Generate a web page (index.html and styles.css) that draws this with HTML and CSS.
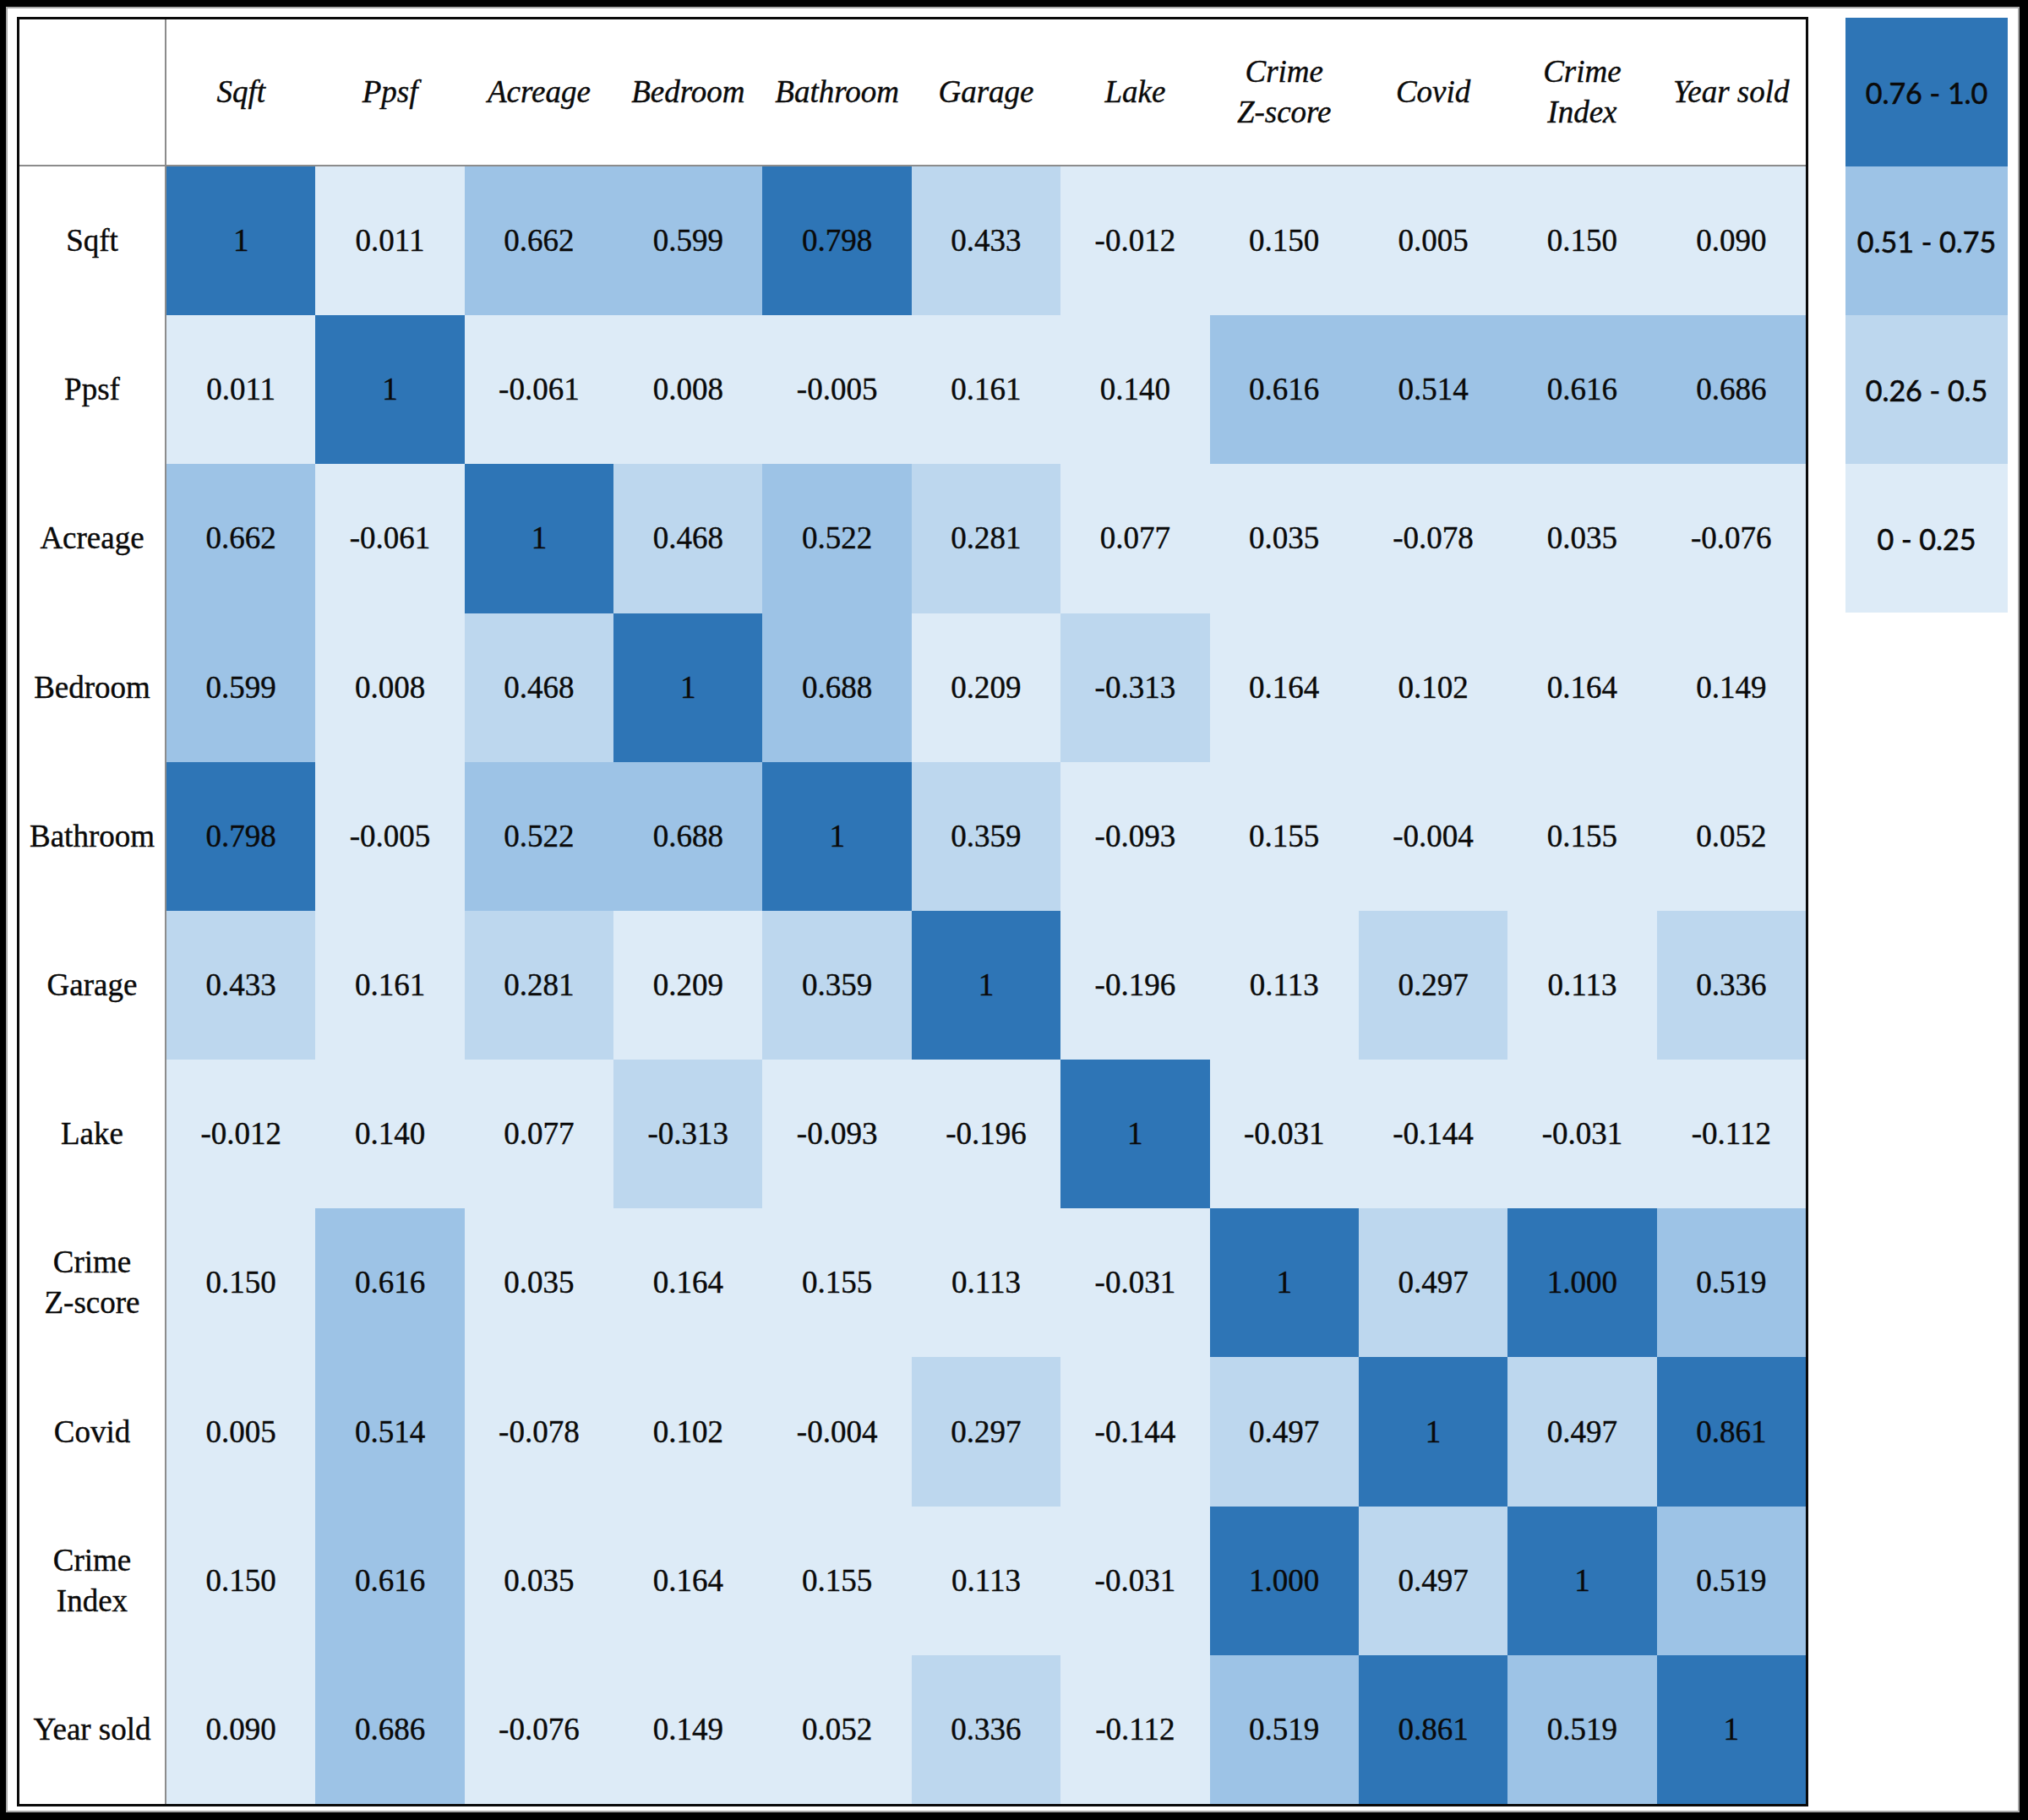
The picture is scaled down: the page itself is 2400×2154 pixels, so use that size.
FILE: index.html
```html
<!DOCTYPE html>
<html lang="en">
<head>
<meta charset="utf-8">
<title>Correlation matrix</title>
<link rel="stylesheet" href="styles.css">
</head>
<body>
<div class="frame">
  <div class="matrix">
    <div class="corner"></div>
    <div class="colhead">Sqft</div>
    <div class="colhead">Ppsf</div>
    <div class="colhead">Acreage</div>
    <div class="colhead">Bedroom</div>
    <div class="colhead">Bathroom</div>
    <div class="colhead">Garage</div>
    <div class="colhead">Lake</div>
    <div class="colhead">Crime<br>Z-score</div>
    <div class="colhead">Covid</div>
    <div class="colhead">Crime<br>Index</div>
    <div class="colhead">Year sold</div>

    <div class="rowhead">Sqft</div>
    <div class="cell c4">1</div><div class="cell c1">0.011</div><div class="cell c3">0.662</div><div class="cell c3">0.599</div><div class="cell c4">0.798</div><div class="cell c2">0.433</div><div class="cell c1">-0.012</div><div class="cell c1">0.150</div><div class="cell c1">0.005</div><div class="cell c1">0.150</div><div class="cell c1">0.090</div>

    <div class="rowhead">Ppsf</div>
    <div class="cell c1">0.011</div><div class="cell c4">1</div><div class="cell c1">-0.061</div><div class="cell c1">0.008</div><div class="cell c1">-0.005</div><div class="cell c1">0.161</div><div class="cell c1">0.140</div><div class="cell c3">0.616</div><div class="cell c3">0.514</div><div class="cell c3">0.616</div><div class="cell c3">0.686</div>

    <div class="rowhead">Acreage</div>
    <div class="cell c3">0.662</div><div class="cell c1">-0.061</div><div class="cell c4">1</div><div class="cell c2">0.468</div><div class="cell c3">0.522</div><div class="cell c2">0.281</div><div class="cell c1">0.077</div><div class="cell c1">0.035</div><div class="cell c1">-0.078</div><div class="cell c1">0.035</div><div class="cell c1">-0.076</div>

    <div class="rowhead">Bedroom</div>
    <div class="cell c3">0.599</div><div class="cell c1">0.008</div><div class="cell c2">0.468</div><div class="cell c4">1</div><div class="cell c3">0.688</div><div class="cell c1">0.209</div><div class="cell c2">-0.313</div><div class="cell c1">0.164</div><div class="cell c1">0.102</div><div class="cell c1">0.164</div><div class="cell c1">0.149</div>

    <div class="rowhead">Bathroom</div>
    <div class="cell c4">0.798</div><div class="cell c1">-0.005</div><div class="cell c3">0.522</div><div class="cell c3">0.688</div><div class="cell c4">1</div><div class="cell c2">0.359</div><div class="cell c1">-0.093</div><div class="cell c1">0.155</div><div class="cell c1">-0.004</div><div class="cell c1">0.155</div><div class="cell c1">0.052</div>

    <div class="rowhead">Garage</div>
    <div class="cell c2">0.433</div><div class="cell c1">0.161</div><div class="cell c2">0.281</div><div class="cell c1">0.209</div><div class="cell c2">0.359</div><div class="cell c4">1</div><div class="cell c1">-0.196</div><div class="cell c1">0.113</div><div class="cell c2">0.297</div><div class="cell c1">0.113</div><div class="cell c2">0.336</div>

    <div class="rowhead">Lake</div>
    <div class="cell c1">-0.012</div><div class="cell c1">0.140</div><div class="cell c1">0.077</div><div class="cell c2">-0.313</div><div class="cell c1">-0.093</div><div class="cell c1">-0.196</div><div class="cell c4">1</div><div class="cell c1">-0.031</div><div class="cell c1">-0.144</div><div class="cell c1">-0.031</div><div class="cell c1">-0.112</div>

    <div class="rowhead">Crime<br>Z-score</div>
    <div class="cell c1">0.150</div><div class="cell c3">0.616</div><div class="cell c1">0.035</div><div class="cell c1">0.164</div><div class="cell c1">0.155</div><div class="cell c1">0.113</div><div class="cell c1">-0.031</div><div class="cell c4">1</div><div class="cell c2">0.497</div><div class="cell c4">1.000</div><div class="cell c3">0.519</div>

    <div class="rowhead">Covid</div>
    <div class="cell c1">0.005</div><div class="cell c3">0.514</div><div class="cell c1">-0.078</div><div class="cell c1">0.102</div><div class="cell c1">-0.004</div><div class="cell c2">0.297</div><div class="cell c1">-0.144</div><div class="cell c2">0.497</div><div class="cell c4">1</div><div class="cell c2">0.497</div><div class="cell c4">0.861</div>

    <div class="rowhead">Crime<br>Index</div>
    <div class="cell c1">0.150</div><div class="cell c3">0.616</div><div class="cell c1">0.035</div><div class="cell c1">0.164</div><div class="cell c1">0.155</div><div class="cell c1">0.113</div><div class="cell c1">-0.031</div><div class="cell c4">1.000</div><div class="cell c2">0.497</div><div class="cell c4">1</div><div class="cell c3">0.519</div>

    <div class="rowhead">Year sold</div>
    <div class="cell c1">0.090</div><div class="cell c3">0.686</div><div class="cell c1">-0.076</div><div class="cell c1">0.149</div><div class="cell c1">0.052</div><div class="cell c2">0.336</div><div class="cell c1">-0.112</div><div class="cell c3">0.519</div><div class="cell c4">0.861</div><div class="cell c3">0.519</div><div class="cell c4">1</div>
  </div>

  <div class="legend">
    <div class="key c4">0.76 - 1.0</div>
    <div class="key c3">0.51 - 0.75</div>
    <div class="key c2">0.26 - 0.5</div>
    <div class="key c1">0 - 0.25</div>
  </div>
</div>
</body>
</html>
```

FILE: styles.css
```css
html, body {
  margin: 0;
  padding: 0;
  background: #ffffff;
}

.frame {
  width: 2400px;
  height: 2154px;
  box-sizing: border-box;
  border-style: solid;
  border-color: #000000;
  border-width: 8px 10px 9px 7px;
  box-shadow: inset 0 0 0 2px #a9a9a9;
  padding: 12px 0 0 13px;
  display: flex;
  align-items: flex-start;
  gap: 44px;
  background: #ffffff;
}

.matrix {
  width: 2120px;
  height: 2118px;
  box-sizing: border-box;
  border: 3px solid #0a0a0a;
  display: grid;
  grid-template-columns: 174px repeat(11, 1fr);
  grid-template-rows: 174px repeat(11, 1fr);
  font-family: "Liberation Serif", "Times New Roman", serif;
  font-size: 37px;
  line-height: 48px;
  color: #0a0a0a;
  -webkit-text-stroke: 0.4px #0a0a0a;
  flex: none;
}

.corner,
.colhead,
.rowhead,
.cell {
  display: flex;
  align-items: center;
  justify-content: center;
  text-align: center;
  box-sizing: border-box;
}

.corner {
  border-right: 2px solid #8c8c8c;
  border-bottom: 2px solid #8c8c8c;
  background: #ffffff;
}

.colhead {
  font-style: italic;
  border-bottom: 2px solid #8c8c8c;
  background: #ffffff;
}

.rowhead {
  border-right: 2px solid #8c8c8c;
  background: #ffffff;
}

.c1 { background: #ddebf7; }
.c2 { background: #bdd7ee; }
.c3 { background: #9dc3e6; }
.c4 { background: #2e75b6; }

.legend {
  width: 192px;
  margin-top: 1px;
  display: flex;
  flex-direction: column;
  flex: none;
}

.key {
  height: 176px;
  display: flex;
  align-items: center;
  justify-content: center;
  font-family: Lato, "Open Sans", sans-serif;
  font-size: 34px;
  color: #0a0a0a;
  -webkit-text-stroke: 0.6px #0a0a0a;
}
```
